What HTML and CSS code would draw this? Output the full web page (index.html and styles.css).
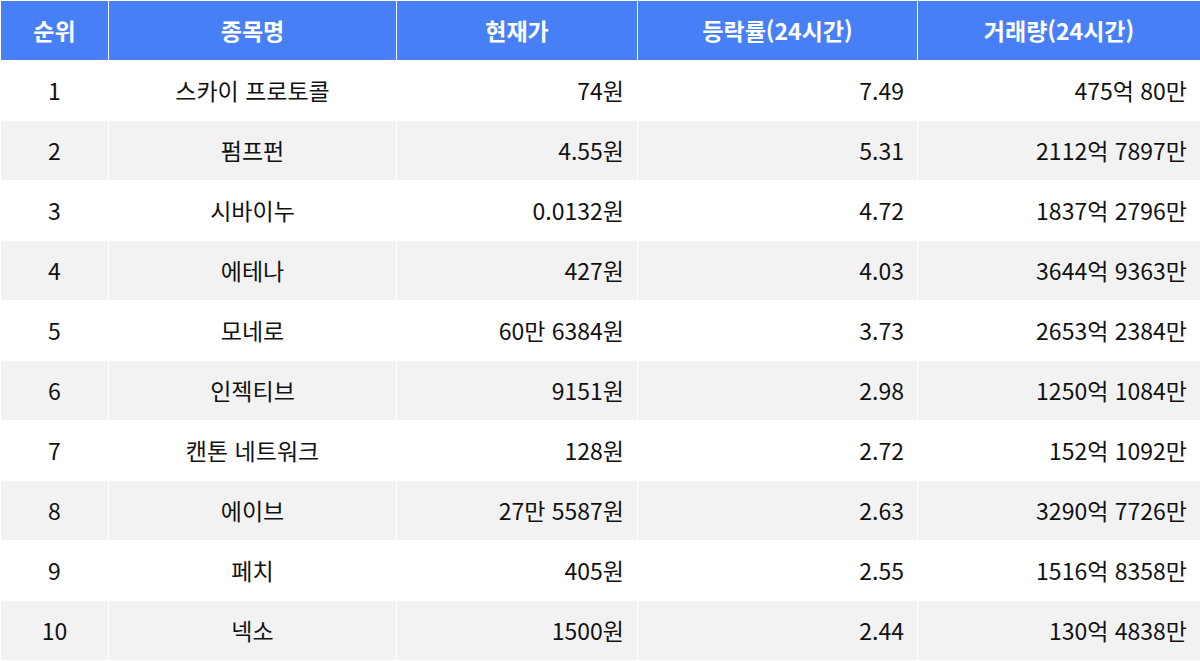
FILE: index.html
```html
<!DOCTYPE html>
<html lang="ko">
<head>
<meta charset="utf-8">
<link rel="stylesheet" href="styles.css">
</head>
<body>
<table class="rank">
  <colgroup>
    <col class="c-rank"><col class="c-name"><col class="c-price"><col class="c-rate"><col class="c-vol">
  </colgroup>
  <thead>
    <tr><th>순위</th><th>종목명</th><th>현재가</th><th>등락률(24시간)</th><th>거래량(24시간)</th></tr>
  </thead>
  <tbody>
    <tr><td>1</td><td>스카이 프로토콜</td><td class="num">74원</td><td class="num">7.49</td><td class="num">475억 80만</td></tr>
    <tr><td>2</td><td>펌프펀</td><td class="num">4.55원</td><td class="num">5.31</td><td class="num">2112억 7897만</td></tr>
    <tr><td>3</td><td>시바이누</td><td class="num">0.0132원</td><td class="num">4.72</td><td class="num">1837억 2796만</td></tr>
    <tr><td>4</td><td>에테나</td><td class="num">427원</td><td class="num">4.03</td><td class="num">3644억 9363만</td></tr>
    <tr><td>5</td><td>모네로</td><td class="num">60만 6384원</td><td class="num">3.73</td><td class="num">2653억 2384만</td></tr>
    <tr><td>6</td><td>인젝티브</td><td class="num">9151원</td><td class="num">2.98</td><td class="num">1250억 1084만</td></tr>
    <tr><td>7</td><td>캔톤 네트워크</td><td class="num">128원</td><td class="num">2.72</td><td class="num">152억 1092만</td></tr>
    <tr><td>8</td><td>에이브</td><td class="num">27만 5587원</td><td class="num">2.63</td><td class="num">3290억 7726만</td></tr>
    <tr><td>9</td><td>페치</td><td class="num">405원</td><td class="num">2.55</td><td class="num">1516억 8358만</td></tr>
    <tr><td>10</td><td>넥소</td><td class="num">1500원</td><td class="num">2.44</td><td class="num">130억 4838만</td></tr>
  </tbody>
</table>
</body>
</html>
```

FILE: styles.css
```css
html, body {
  margin: 0;
  padding: 0;
  background: #ffffff;
}
body {
  font-family: "Noto Sans CJK KR", "Noto Sans", sans-serif;
  color: #111111;
}
.rank {
  width: 1200px;
  border-collapse: collapse;
  table-layout: fixed;
}
.c-rank { width: 108px; }
.c-name { width: 288px; }
.c-price { width: 241px; }
.c-rate { width: 280px; }
.c-vol { width: 283px; }
.rank th, .rank td {
  border: 1px solid #ffffff;
  height: 59px;
  padding: 0 13px;
  text-align: center;
  font-size: 23px;
  line-height: 1;
  white-space: nowrap;
}
.rank th {
  background: #4780f6;
  color: #ffffff;
  font-weight: 700;
  height: 59px;
}
.rank td {
  font-weight: 400;
}
.rank td.num {
  text-align: right;
}
.rank tbody tr:nth-child(even) td {
  background: #f2f2f2;
}
```
